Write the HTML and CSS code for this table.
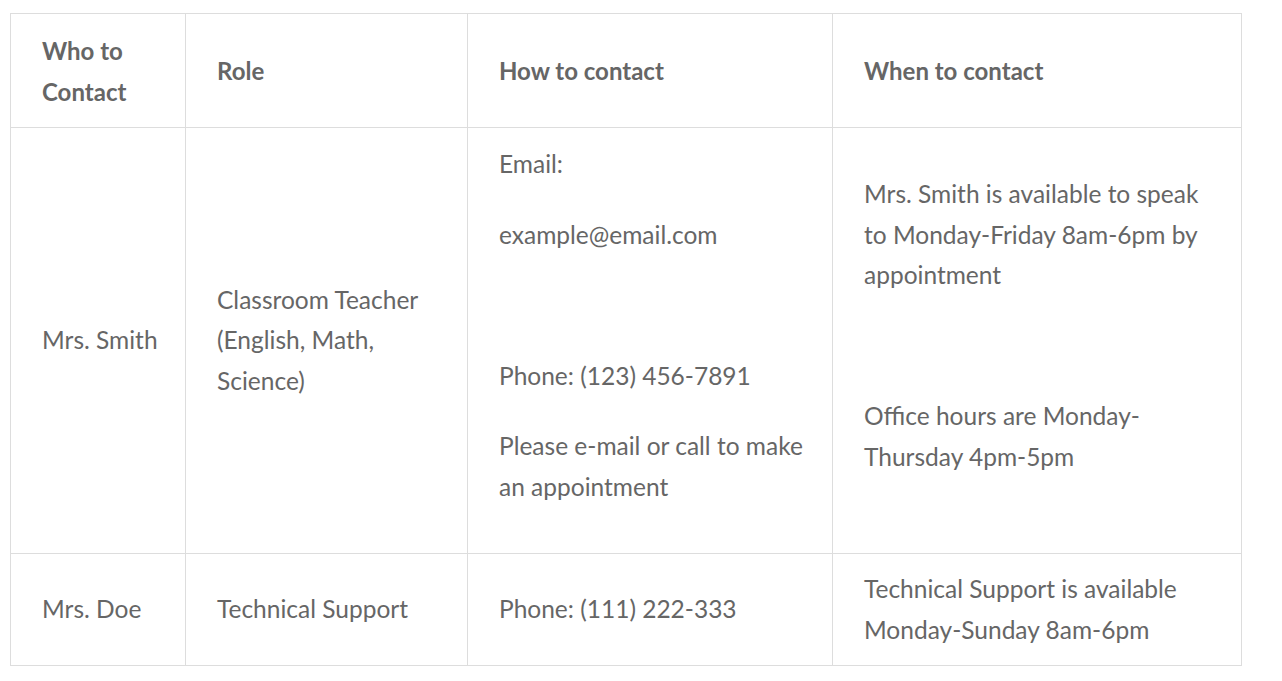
FILE: index.html
```html
<!DOCTYPE html>
<html lang="en">
<head>
<meta charset="utf-8">
<title>Contacts</title>
<link rel="stylesheet" href="styles.css">
</head>
<body>
<table class="contacts">
  <colgroup>
    <col class="c1">
    <col class="c2">
    <col class="c3">
    <col class="c4">
  </colgroup>
  <thead>
    <tr>
      <th>Who to Contact</th>
      <th>Role</th>
      <th>How to contact</th>
      <th>When to contact</th>
    </tr>
  </thead>
  <tbody>
    <tr>
      <td>Mrs. Smith</td>
      <td>Classroom Teacher (English, Math, Science)</td>
      <td>
        <p>Email:</p>
        <p>example@email.com</p>
        <p>&nbsp;</p>
        <p>Phone: (123) 456-7891</p>
        <p>Please e-mail or call to make an appointment</p>
      </td>
      <td>
        <p>Mrs. Smith is available to speak to Monday-Friday 8am-6pm by appointment</p>
        <p>&nbsp;</p>
        <p>Office hours are Monday-Thursday 4pm-5pm</p>
      </td>
    </tr>
    <tr class="last">
      <td>Mrs. Doe</td>
      <td>Technical Support</td>
      <td>Phone: (111) 222-333</td>
      <td>Technical Support is available Monday-Sunday 8am-6pm</td>
    </tr>
  </tbody>
</table>
</body>
</html>
```

FILE: styles.css
```css
html, body {
  margin: 0;
  padding: 0;
  background: #ffffff;
}

body {
  padding: 13px 0 0 10px;
  font-family: "Lato", "Liberation Sans", sans-serif;
  font-size: 24.5px;
  line-height: 40.5px;
  color: #666666;
}

.contacts {
  border-collapse: collapse;
  table-layout: fixed;
  width: 1231px;
}

.c1 { width: 175px; }
.c2 { width: 282px; }
.c3 { width: 365px; }
.c4 { width: 409px; }

.contacts th,
.contacts td {
  border: 1px solid #dddddd;
  padding: 16px 24px 16px 31px;
  vertical-align: middle;
  text-align: left;
}

.contacts th {
  font-size: 24px;
  font-weight: 700;
  padding-top: 17px;
  padding-bottom: 15px;
}

.contacts td p {
  margin: 0 0 30px;
}

.contacts .last td {
  padding-top: 15px;
  padding-bottom: 15px;
}
```
